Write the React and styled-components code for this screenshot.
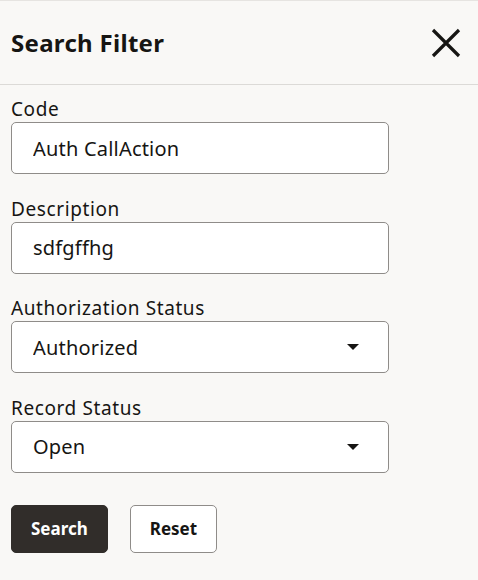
import React, { useState } from "react";
import styled, { createGlobalStyle } from "styled-components";

const GlobalStyle = createGlobalStyle`
  html, body {
    margin: 0;
    padding: 0;
    background: #f9f8f6;
    font-family: "Noto Sans", "Open Sans", sans-serif;
    color: #161513;
  }
`;

const Panel = styled.div`
  width: 478px;
  height: 580px;
  background: #f9f8f6;
  border-top: 1px solid #e6e4e1;
  box-sizing: border-box;
`;

const Header = styled.div`
  display: flex;
  align-items: center;
  justify-content: space-between;
  height: 83px;
  padding: 0 16px 0 11px;
  border-bottom: 1px solid #dcdad7;
`;

const Title = styled.h2`
  margin: 0;
  font-size: 24px;
  font-weight: 700;
  letter-spacing: 0.3px;
`;

const CloseButton = styled.button`
  display: flex;
  align-items: center;
  justify-content: center;
  width: 32px;
  height: 32px;
  padding: 0;
  border: none;
  background: transparent;
  cursor: pointer;
`;

const Form = styled.form`
  display: flex;
  flex-direction: column;
  padding: 12px 11px 0;
`;

const Field = styled.div`
  display: flex;
  flex-direction: column;
  width: 378px;
  margin-bottom: 22.66px;
`;

const Label = styled.label`
  font-size: 19px;
  line-height: 24px;
  margin-bottom: 1px;
  letter-spacing: 0.6px;
`;

const Box = styled.div`
  position: relative;
  display: flex;
  align-items: center;
  height: 52px;
  box-sizing: border-box;
  background: #fff;
  border: 1px solid #8f8c89;
  border-radius: 5px;
`;

const TextInput = styled.input`
  width: 100%;
  height: 100%;
  box-sizing: border-box;
  padding: 0 21px;
  border: none;
  background: transparent;
  outline: none;
  font-family: inherit;
  font-size: 20px;
  letter-spacing: 0.2px;
  color: #161513;
`;

const Caret = styled.span`
  position: absolute;
  right: 29px;
  top: 22px;
  width: 0;
  height: 0;
  border-left: 6px solid transparent;
  border-right: 6px solid transparent;
  border-top: 6px solid #161513;
  pointer-events: none;
`;

const Buttons = styled.div`
  display: flex;
  gap: 22px;
  margin-top: 9px;
`;

const Button = styled.button`
  height: 48px;
  padding: 0 19px;
  box-sizing: border-box;
  border-radius: 5px;
  border: 1px solid ${(p) => (p.$primary ? "#312d2a" : "#8f8c89")};
  background: ${(p) => (p.$primary ? "#312d2a" : "#fff")};
  color: ${(p) => (p.$primary ? "#fff" : "#161513")};
  font-family: inherit;
  font-size: 17px;
  font-weight: 700;
  cursor: pointer;
`;

function TextField({ label, value, onChange }) {
  return (
    <Field>
      <Label>{label}</Label>
      <Box>
        <TextInput value={value} onChange={(e) => onChange(e.target.value)} />
      </Box>
    </Field>
  );
}

function SelectField({ label, value }) {
  return (
    <Field>
      <Label>{label}</Label>
      <Box>
        <TextInput value={value} readOnly />
        <Caret />
      </Box>
    </Field>
  );
}

export default function App() {
  const [code, setCode] = useState("Auth CallAction");
  const [desc, setDesc] = useState("sdfgffhg");

  return (
    <Panel>
      <GlobalStyle />
      <Header>
        <Title>Search Filter</Title>
        <CloseButton aria-label="Close">
          <svg width="30" height="30" viewBox="0 0 30 30">
            <path
              d="M2 2 L28 28 M28 2 L2 28"
              stroke="#161513"
              strokeWidth="3.2"
              fill="none"
            />
          </svg>
        </CloseButton>
      </Header>
      <Form onSubmit={(e) => e.preventDefault()}>
        <TextField label="Code" value={code} onChange={setCode} />
        <TextField label="Description" value={desc} onChange={setDesc} />
        <SelectField label="Authorization Status" value="Authorized" />
        <SelectField label="Record Status" value="Open" />
        <Buttons>
          <Button $primary>Search</Button>
          <Button type="button">Reset</Button>
        </Buttons>
      </Form>
    </Panel>
  );
}
